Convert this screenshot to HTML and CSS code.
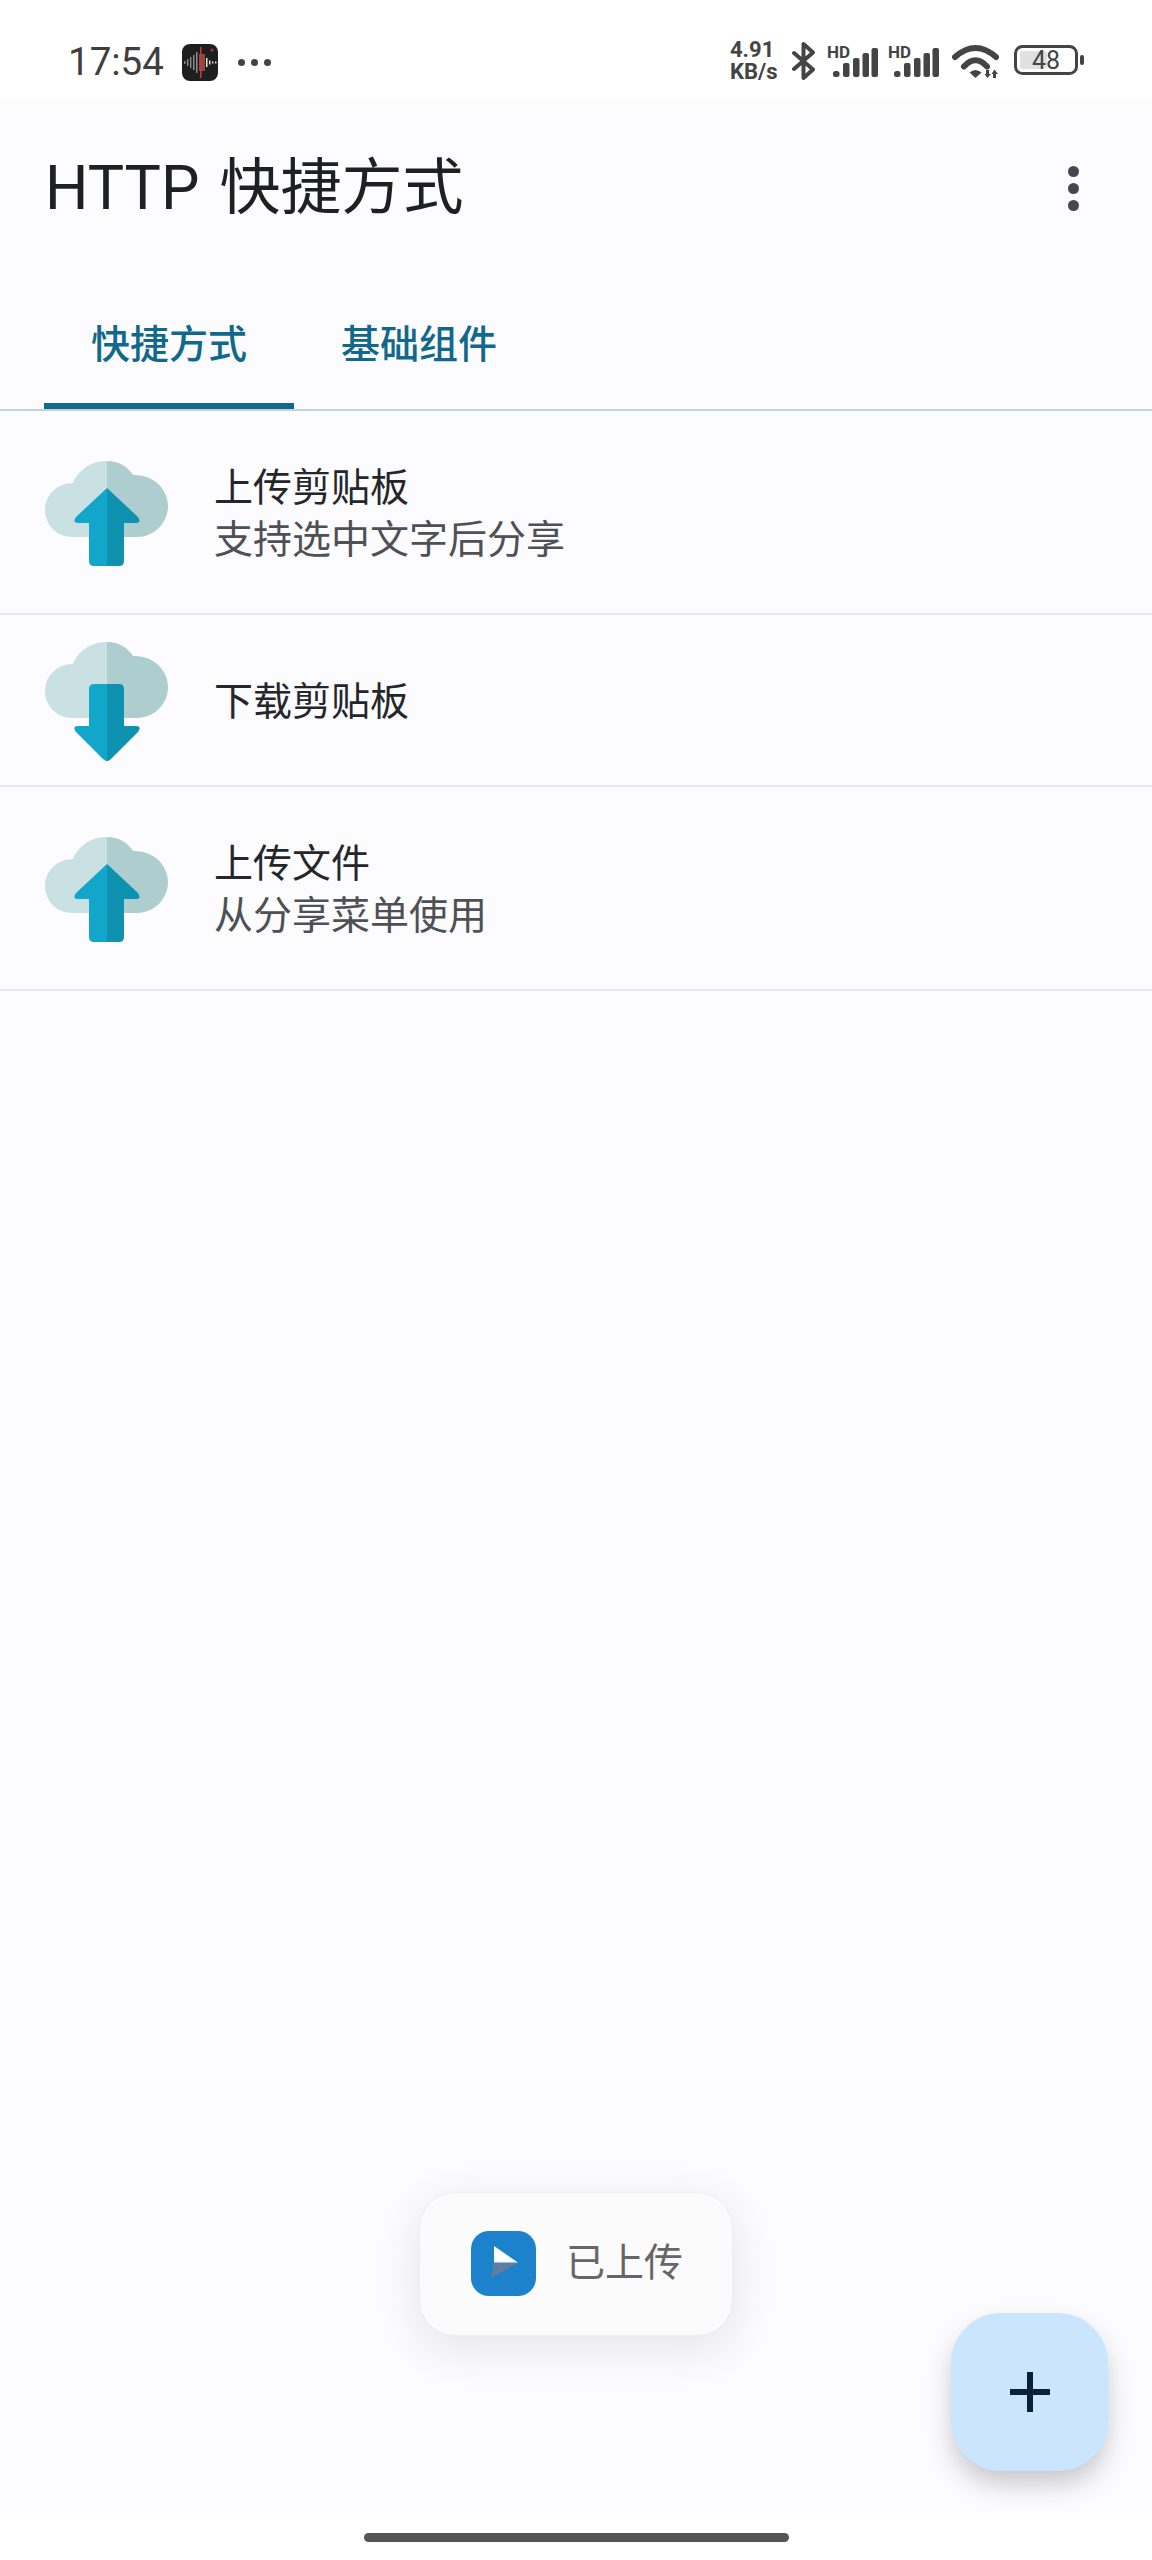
FILE: index.html
```html
<!DOCTYPE html>
<html lang="zh-CN">
<head>
<meta charset="utf-8">
<title>HTTP 快捷方式</title>
<link rel="stylesheet" href="styles.css">
</head>
<body>
<svg class="defs" width="0" height="0" aria-hidden="true">
  <defs>
    <g id="cloud">
      <path fill="#c9e1e3" d="M62 0C46 0 33 9 28 22C12 22 0 34 0 49C0 64 12 76 27 76L62 76Z"/>
      <path fill="#aecdce" d="M62 0C74 0 83 6 88 14C108 13 123 28 123 45C123 62 109 76 92 76L62 76Z"/>
    </g>
    <g id="signal">
      <text class="hd" x="0" y="13">HD</text>
      <rect x="6" y="26" width="6.500" height="6" rx="2.500"/>
      <rect x="16" y="18" width="6.500" height="14" rx="2"/>
      <rect x="26" y="13" width="6.500" height="19" rx="2"/>
      <rect x="35.500" y="8" width="6.500" height="24" rx="2"/>
      <rect x="44.500" y="3" width="6.500" height="29" rx="2"/>
    </g>
  </defs>
</svg>
<div class="phone">
  <header class="status">
    <div class="status-left">
      <span class="time">17:54</span>
      <svg class="rec" width="36" height="37" viewBox="0 0 36 37">
        <rect width="36" height="37" rx="8" fill="#1e1e1e"/>
        <g fill="#8d8d8d">
          <rect x="2" y="17" width="1.400" height="3"/>
          <rect x="5" y="15" width="1.400" height="7"/>
          <rect x="8" y="13" width="1.400" height="11"/>
          <rect x="11" y="11" width="1.500" height="15"/>
          <rect x="14" y="8" width="1.500" height="21"/>
        </g>
        <rect x="17" y="10" width="6" height="17" fill="#8b4a48"/>
        <rect x="18" y="3" width="1.600" height="31" fill="#c23a34"/>
        <g fill="#e8e8e8">
          <rect x="24" y="14" width="1.500" height="9"/>
          <rect x="27" y="16.500" width="1.400" height="4"/>
          <rect x="30" y="17.500" width="1.400" height="2"/>
          <rect x="33" y="17.500" width="1.400" height="2"/>
        </g>
        <circle cx="30" cy="6" r="1.600" fill="#b8332e"/>
      </svg>
      <span class="more"><i></i><i></i><i></i></span>
    </div>
    <div class="status-right">
      <div class="speed"><span>4.91</span><span>KB/s</span></div>
      <svg class="bt" width="23" height="38" viewBox="0 0 23 38"><path d="M2 11L21 27.500L11.500 36V2L21 10.500L2 27"/></svg>
      <svg class="sig" width="51" height="32" viewBox="0 0 51 32"><use href="#signal"/></svg>
      <svg class="sig" width="51" height="32" viewBox="0 0 51 32"><use href="#signal"/></svg>
      <svg class="wifi" width="47" height="34" viewBox="0 0 47 34">
        <path class="arc" d="M3 13Q23.500 -5 44 13"/>
        <path class="arc" d="M12 22.500Q23.500 10 35 22.500"/>
        <path class="wedge" d="M17.500 28.500Q23.500 23.500 29.500 28.500L23.500 34Z"/>
        <path class="wedge" d="M34 26H37V30H39L35.500 34L32.500 30H34Z"/>
        <path class="wedge" d="M41 34H44V30H46L42.500 25.500L39.500 30H41Z"/>
      </svg>
      <svg class="bat" width="70" height="32" viewBox="0 0 70 32">
        <rect class="bat-body" x="1.500" y="1.500" width="61" height="27" rx="7"/>
        <rect class="bat-fill" x="6" y="6" width="27" height="18" rx="3"/>
        <text class="bat-num" x="32" y="24">48</text>
        <rect class="bat-nub" x="66" y="10" width="4" height="10" rx="2"/>
      </svg>
    </div>
  </header>

  <main class="main">
    <div class="appbar">
      <h1 class="title">HTTP 快捷方式</h1>
      <span class="kebab"><i></i><i></i><i></i></span>
    </div>
    <nav class="tabs">
      <a class="tab tab--active">快捷方式</a>
      <a class="tab">基础组件</a>
    </nav>
    <ul class="list">
      <li class="row">
        <svg class="ico" width="124" height="105" viewBox="0 0 124 105">
          <use href="#cloud"/>
          <path fill="#12a6ca" d="M62 27L31 56Q27 62 33 62H44V100Q44 105 49 105H62Z"/>
          <path fill="#0f91b0" d="M62 27L93 56Q97 62 91 62H79V100Q79 105 74 105H62Z"/>
        </svg>
        <div class="txt"><div class="t1">上传剪贴板</div><div class="t2">支持选中文字后分享</div></div>
      </li>
      <li class="row row--single">
        <svg class="ico" width="124" height="119" viewBox="0 0 124 119">
          <use href="#cloud"/>
          <path fill="#12a6ca" d="M62 42H49Q44 42 44 47V84H33Q27 84 31 90L58 117Q62 120 62 119Z"/>
          <path fill="#0f91b0" d="M62 42H74Q79 42 79 47V84H91Q97 84 93 90L66 117Q62 120 62 119Z"/>
        </svg>
        <div class="txt"><div class="t1">下载剪贴板</div></div>
      </li>
      <li class="row">
        <svg class="ico" width="124" height="105" viewBox="0 0 124 105">
          <use href="#cloud"/>
          <path fill="#12a6ca" d="M62 27L31 56Q27 62 33 62H44V100Q44 105 49 105H62Z"/>
          <path fill="#0f91b0" d="M62 27L93 56Q97 62 91 62H79V100Q79 105 74 105H62Z"/>
        </svg>
        <div class="txt"><div class="t1">上传文件</div><div class="t2">从分享菜单使用</div></div>
      </li>
    </ul>

    <div class="toast">
      <svg class="toast-ico" width="65" height="65" viewBox="0 0 65 65">
        <rect width="65" height="65" rx="18" fill="#1c82cc"/>
        <path fill="#5f7e9f" d="M23 32H47L20 47Z"/>
        <path fill="#fff" d="M23 15L47 31.500H23Z"/>
      </svg>
      <span class="toast-text">已上传</span>
    </div>

    <button class="fab" type="button" aria-label="添加">
      <svg width="40" height="40" viewBox="0 0 40 40"><path d="M20 0V40M0 20H40"/></svg>
    </button>
  </main>

  <footer class="nav"><span class="pill"></span></footer>
</div>
</body>
</html>
```

FILE: styles.css
```css
* { box-sizing: border-box; }
html, body { margin: 0; padding: 0; }
body { font-family: Roboto, "Noto Sans CJK SC", sans-serif; background: #fff; }
.defs { position: absolute; }
.phone { width: 1152px; height: 2560px; display: flex; flex-direction: column; background: #fff; overflow: hidden; }

/* status bar */
.status { height: 100px; flex: none; display: flex; justify-content: space-between; align-items: center; padding: 0 68px; background: #fff; color: #444; }
.status-left { display: flex; align-items: center; height: 100%; padding-top: 24px; }
.time { font-size: 38.500px; font-weight: 400; line-height: 46px; width: 114px; color: #3f3f3f; }
.rec { flex: none; }
.more { display: flex; gap: 6px; margin-left: 20px; }
.more i { width: 7px; height: 7px; border-radius: 50%; background: #444; }
.status-right { display: flex; align-items: center; height: 100%; padding-top: 22px; }
.speed { display: flex; flex-direction: column; width: 49px; margin-right: 13px; font-size: 22px; font-weight: 700; line-height: 22px; color: #444; white-space: nowrap; }
.bt { margin-right: 12px; fill: none; stroke: #444; stroke-width: 4; stroke-linejoin: round; stroke-linecap: round; }
.sig { margin-right: 10px; fill: #444; }
.sig + .wifi { margin-left: 3px; }
.hd { font: 700 17px Roboto, sans-serif; fill: #444; }
.wifi { margin-right: 15px; }
.arc { fill: none; stroke: #444; stroke-width: 6; stroke-linecap: round; }
.wedge { fill: #444; }
.bat-body { fill: none; stroke: #444; stroke-width: 3; }
.bat-fill { fill: #e0e0e0; }
.bat-num { font: 400 25px Roboto, sans-serif; fill: #444; text-anchor: middle; }
.bat-nub { fill: #444; }

/* main */
.main { position: relative; flex: 1; overflow: hidden; background: #fcfcff; }
.appbar { height: 176px; display: flex; align-items: center; justify-content: space-between; padding: 0 73px 0 45px; }
.title { margin: 0; font-size: 61px; font-weight: 400; line-height: 72px; word-spacing: 5px; color: #1f2022; }
.kebab { display: flex; flex-direction: column; gap: 6px; }
.kebab i { width: 11px; height: 11px; border-radius: 50%; background: #424750; }

.tabs { height: 135px; display: flex; padding-left: 44px; border-bottom: 2px solid #c4d3d8; }
.tab { width: 250px; display: flex; align-items: center; justify-content: center; padding-bottom: 4px; font-size: 39px; font-weight: 500; color: #10688a; }
.tab--active { border-bottom: 6px solid #10688a; padding: 2px 0 0; }

.list { list-style: none; margin: 0; padding: 0; }
.row { height: 204px; padding: 3px 0 0 45px; display: flex; align-items: center; gap: 45px; border-bottom: 2px solid #e9eaec; }
.row--single { height: 172px; }
.ico { flex: none; }
.txt { display: flex; flex-direction: column; }
.t1 { font-size: 39px; line-height: 52px; color: #25262a; }
.t2 { font-size: 39px; line-height: 52px; color: #4e5054; }

/* overlays */
.toast { position: absolute; left: 419px; bottom: 177px; width: 314px; height: 144px; display: flex; align-items: center; gap: 30px; padding: 0 0 2px 51px; background: #fbfbfb; border: 1px solid #eeeef2; border-radius: 36px; box-shadow: 0 12px 44px rgba(60, 60, 80, .12); }
.toast-ico { flex: none; }
.toast-text { font-size: 39px; line-height: 46px; color: #666; white-space: nowrap; }

.fab { position: absolute; right: 44px; bottom: 42px; width: 157px; height: 158px; padding: 0; border: 0; border-radius: 50px; background: #cbe5ff; display: flex; align-items: center; justify-content: center; box-shadow: 0 14px 26px -2px rgba(40, 40, 50, .26); }
.fab path { stroke: #0b2138; stroke-width: 6; fill: none; }

/* navigation */
.nav { height: 47px; flex: none; display: flex; justify-content: center; align-items: flex-start; padding-top: 20px; background: #fff; }
.pill { width: 425px; height: 9px; border-radius: 5px; background: #555; }
```
